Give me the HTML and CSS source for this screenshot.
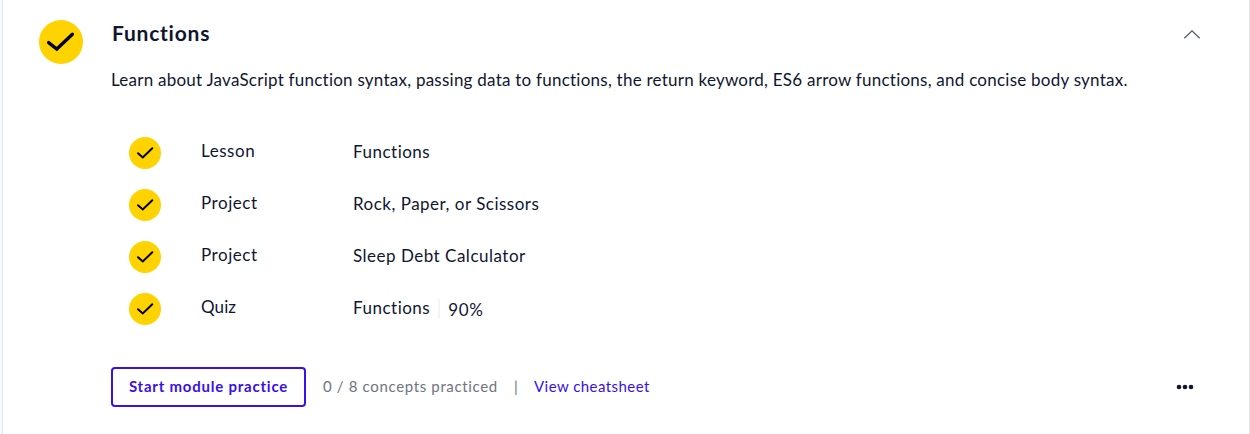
FILE: index.html
```html
<!DOCTYPE html>
<html lang="en">
<head>
<meta charset="utf-8">
<title>Functions</title>
<link rel="stylesheet" href="styles.css">
</head>
<body>
<svg class="defs" width="0" height="0"><symbol id="check" viewBox="0 0 32 32"><path d="M9 16.2 13.8 20.4 23.3 11.3" fill="none" stroke="#000" stroke-linecap="round" stroke-linejoin="miter"/></symbol></svg>
<main class="card">
  <header class="header">
    <span class="badge badge-large"><svg viewBox="0 0 44 44"><path d="M9.6 22.6 17.8 29 33.4 14.2" fill="none" stroke="#000" stroke-width="3.3" stroke-linecap="round"/></svg></span>
    <h2 class="title">Functions</h2>
    <button class="toggle" aria-label="Collapse"><svg width="18" height="12" viewBox="0 0 18 12"><path d="M1.3 9.3 9 1.8 16.7 9.3" fill="none" stroke="#565a73" stroke-width="1.3"/></svg></button>
  </header>
  <section class="content">
    <p class="description">Learn about JavaScript function syntax, passing data to functions, the return keyword, ES6 arrow functions, and concise body syntax.</p>
    <ul class="items">
      <li class="item"><span class="badge"><svg><use href="#check"/></svg></span><span class="kind">Lesson</span><a class="name">Functions</a></li>
      <li class="item"><span class="badge"><svg><use href="#check"/></svg></span><span class="kind">Project</span><a class="name">Rock, Paper, or Scissors</a></li>
      <li class="item"><span class="badge"><svg><use href="#check"/></svg></span><span class="kind">Project</span><a class="name">Sleep Debt Calculator</a></li>
      <li class="item"><span class="badge"><svg><use href="#check"/></svg></span><span class="kind kind-quiz">Quiz</span><a class="name">Functions</a><span class="score">90%</span></li>
    </ul>
    <footer class="footer">
      <button class="practice">Start module practice</button>
      <span class="progress">0 / 8 concepts practiced</span>
      <span class="divider">|</span>
      <a class="cheatsheet">View cheatsheet</a>
      <button class="more" aria-label="More"><svg width="18" height="6" viewBox="0 0 18 6"><g fill="#10162f"><circle cx="3" cy="3" r="2.3"/><circle cx="9" cy="3" r="2.3"/><circle cx="15" cy="3" r="2.3"/></g></svg></button>
    </footer>
  </section>
</main>
</body>
</html>
```
FILE: styles.css
```css
* { box-sizing: border-box; }
body { margin: 0; height: 434px; overflow: hidden; background: #f5fcff; color: #10162f; font-family: Lato, "Liberation Sans", sans-serif; font-size: 17px; line-height: 24px; }
.defs { display: block; }
button { border: 0; padding: 0; background: none; font: inherit; color: inherit; }
svg { display: block; }
.card { height: 434px; margin-left: 2px; border: solid #dfe5eb; border-width: 0 1px; background: #fff; }
.header { display: flex; height: 64px; padding: 20px 48px 0 36px; }
.badge { flex: none; width: 32px; height: 32px; border-radius: 50%; background: #ffd300; }
.badge svg { width: 100%; height: 100%; stroke-width: 2; }
.badge-large { width: 44px; height: 44px; }
.title { flex: 1; margin: 1px 0 0 29px; font-size: 21px; line-height: 24px; font-weight: 700; letter-spacing: .77px; }
.toggle { height: 12px; margin-top: 9px; }
.content { padding: 4px 55px 0 108px; }
.description { margin: 0; white-space: nowrap; letter-spacing: .241px; }
.items { list-style: none; margin: 45px 0 0; padding: 0 0 0 18px; display: grid; gap: 20px; }
.item { display: flex; height: 32px; }
.kind { width: 152px; margin-left: 40px; padding-top: 2px; letter-spacing: .55px; }
.kind-quiz { letter-spacing: .1px; }
.name { padding-top: 3px; letter-spacing: .5px; }
.score { height: 20px; margin: 6px 0 0 8px; padding-left: 8px; border-left: 2px solid #f5f5f5; line-height: 22px; letter-spacing: .6px; }
.footer { display: flex; align-items: center; height: 40px; margin-top: 42px; font-size: 15px; }
.practice { width: 195px; height: 40px; padding-bottom: 2px; border: 2px solid #3a10e5; border-radius: 4px; color: #3a10e5; font-weight: 700; letter-spacing: .78px; }
.progress { width: 175px; margin-left: 17px; padding-bottom: 2px; color: #707382; letter-spacing: .65px; white-space: nowrap; }
.divider { width: 4px; margin: 0 16px; padding-bottom: 2px; color: #707382; }
.cheatsheet { padding-bottom: 2px; color: #3a10e5; letter-spacing: .45px; }
.more { margin-left: auto; }
```
